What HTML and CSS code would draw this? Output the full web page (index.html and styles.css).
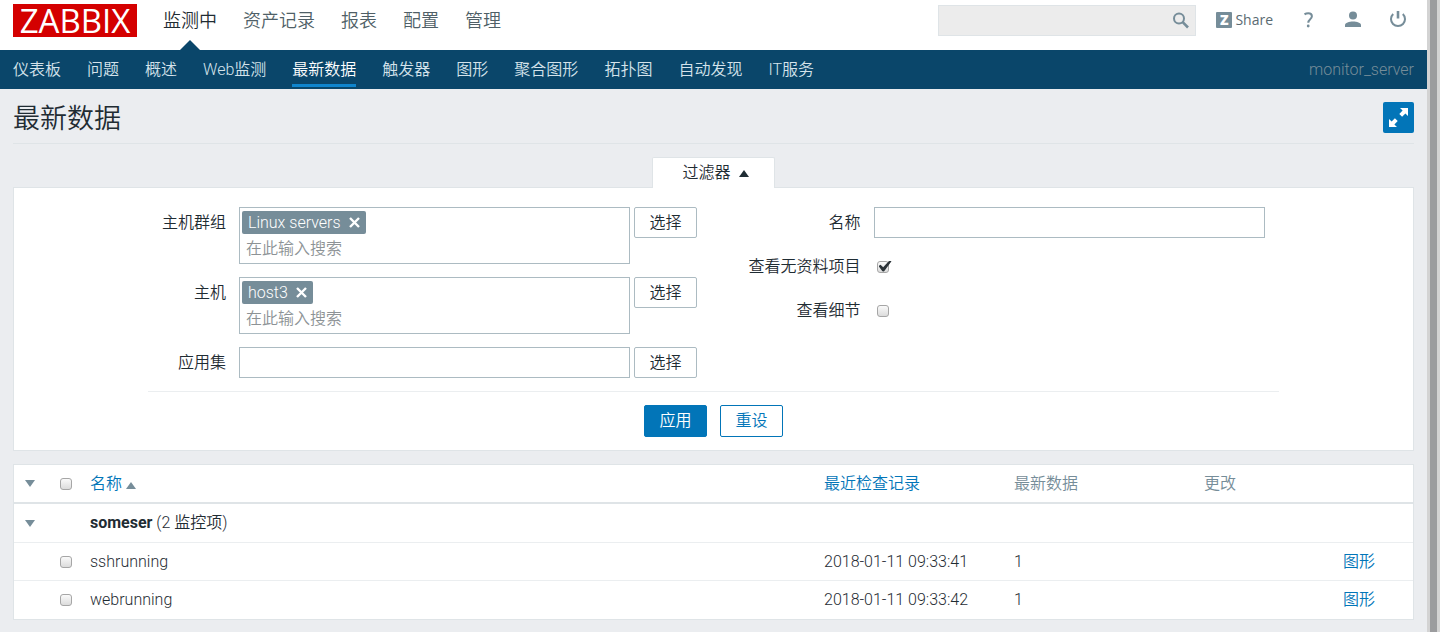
FILE: index.html
```
<!DOCTYPE html>
<html lang="zh-CN">
<head>
<meta charset="utf-8">
<title>最新数据</title>
<link rel="stylesheet" href="styles.css">
</head>
<body>
<div class="shell">
<div class="page">
  <header class="top">
    <a class="logo" href="#">ZABBIX</a>
    <nav class="menu">
      <a class="current" href="#">监测中</a>
      <a href="#">资产记录</a>
      <a href="#">报表</a>
      <a href="#">配置</a>
      <a href="#">管理</a>
    </nav>
    <form class="search">
      <input type="text" aria-label="搜索">
      <button type="button" aria-label="搜索">
        <svg width="18" height="18" viewBox="0 0 18 18"><circle cx="7" cy="6.500" r="5" fill="none" stroke="#768d99" stroke-width="2"/><path d="M10.700 10.200L16 15.500" stroke="#768d99" stroke-width="2.600"/></svg>
      </button>
    </form>
    <div class="tools">
      <a class="share" href="#"><span class="z">Z</span>Share</a>
      <a class="tool" href="#" aria-label="帮助"><svg width="16" height="18" viewBox="0 0 16 18"><path d="M4.500 3.400C5.600 2.600 6.800 2.200 8.300 2.200c2.200 0 3.600 1.100 3.600 3 0 3-3.600 3-3.600 6.500" fill="none" stroke="#768d99" stroke-width="2"/><circle cx="8.200" cy="15" r="1.400" fill="#768d99"/></svg></a>
      <a class="tool" href="#" aria-label="用户"><svg width="16" height="18" viewBox="0 0 16 18"><circle cx="8" cy="4.600" r="4" fill="#768d99"/><path d="M0 16v-2c0-2.200 4.200-3.500 8-3.500s8 1.300 8 3.500v2z" fill="#768d99"/></svg></a>
      <a class="tool" href="#" aria-label="退出"><svg width="16" height="18" viewBox="0 0 16 18"><path d="M3.200 3a7 7 0 1 0 9.600 0" fill="none" stroke="#768d99" stroke-width="2"/><path d="M8 0v7.500" stroke="#768d99" stroke-width="2.600"/></svg></a>
    </div>
  </header>
  <nav class="sub">
    <a href="#">仪表板</a>
    <a href="#">问题</a>
    <a href="#">概述</a>
    <a href="#">Web监测</a>
    <a class="current" href="#">最新数据</a>
    <a href="#">触发器</a>
    <a href="#">图形</a>
    <a href="#">聚合图形</a>
    <a href="#">拓扑图</a>
    <a href="#">自动发现</a>
    <a href="#">IT服务</a>
    <span class="server">monitor_server</span>
  </nav>
  <main>
    <div class="title">
      <h1>最新数据</h1>
      <button type="button" class="full" aria-label="全屏"><svg width="19" height="19" viewBox="0 0 19 19" fill="#fff"><path d="M11 0h8v8l-2.600-2.600-3.300 3.300-2.800-2.800 3.300-3.300z"/><path d="M0 19v-8l2.600 2.600 3.300-3.300 2.800 2.800-3.300 3.300L8 19z"/></svg></button>
    </div>
    <div class="tabs"><button type="button" class="tab">过滤器<svg width="10" height="7" viewBox="0 0 10 7"><path d="M5 0l5 7H0z" fill="#1f2c33"/></svg></button></div>
    <form class="filter">
      <div class="fields">
        <div class="side">
          <div class="row"><label for="groups">主机群组</label>
            <div class="multi"><span class="chip">Linux servers<button type="button" aria-label="移除"><svg width="11" height="11" viewBox="0 0 11 11"><path d="M1 1l9 9M10 1l-9 9" stroke="#fff" stroke-width="2.400"/></svg></button></span><input id="groups" type="text" placeholder="在此输入搜索"></div>
            <button type="button" class="btn">选择</button></div>
          <div class="row"><label for="hosts">主机</label>
            <div class="multi"><span class="chip">host3<button type="button" aria-label="移除"><svg width="11" height="11" viewBox="0 0 11 11"><path d="M1 1l9 9M10 1l-9 9" stroke="#fff" stroke-width="2.400"/></svg></button></span><input id="hosts" type="text" placeholder="在此输入搜索"></div>
            <button type="button" class="btn">选择</button></div>
          <div class="row"><label for="app">应用集</label><input id="app" class="text" type="text"><button type="button" class="btn">选择</button></div>
        </div>
        <div class="side right">
          <div class="row"><label for="name">名称</label><input id="name" class="text" type="text"></div>
          <div class="row"><label for="nodata">查看无资料项目</label><input id="nodata" class="check" type="checkbox" checked></div>
          <div class="row"><label for="details">查看细节</label><input id="details" class="check" type="checkbox"></div>
        </div>
      </div>
      <div class="actions"><button type="button" class="btn primary">应用</button><button type="button" class="btn outline">重设</button></div>
    </form>
    <table class="data">
      <colgroup><col class="c-arrow"><col class="c-check"><col><col class="c-wide"><col class="c-wide"><col class="c-change"><col class="c-link"></colgroup>
      <thead>
        <tr><th class="fold"><svg width="10" height="7" viewBox="0 0 10 7"><path d="M0 0h10L5 7z" fill="#768d99"/></svg></th><th><input class="check" type="checkbox" aria-label="全选"></th><th><a href="#">名称<svg class="sort" width="10" height="7" viewBox="0 0 10 7"><path d="M5 0l5 7H0z" fill="#768d99"/></svg></a></th><th><a href="#">最近检查记录</a></th><th>最新数据</th><th>更改</th><th></th></tr>
      </thead>
      <tbody>
        <tr><td class="fold"><svg width="10" height="7" viewBox="0 0 10 7"><path d="M0 0h10L5 7z" fill="#768d99"/></svg></td><td></td><td colspan="5"><strong>someser</strong> (2 监控项)</td></tr>
        <tr><td></td><td><input class="check" type="checkbox" aria-label="sshrunning"></td><td>sshrunning</td><td>2018-01-11 09:33:41</td><td>1</td><td></td><td><a href="#">图形</a></td></tr>
        <tr><td></td><td><input class="check" type="checkbox" aria-label="webrunning"></td><td>webrunning</td><td>2018-01-11 09:33:42</td><td>1</td><td></td><td><a href="#">图形</a></td></tr>
      </tbody>
    </table>
  </main>
</div>
<div class="scroll"></div>
</div>
</body>
</html>
```
FILE: styles.css
```
* { box-sizing: border-box; }
body {
  margin: 0;
  background: #ebedf0;
  color: #1f2c33;
  font: 350 16px/24px Roboto, "Noto Sans CJK SC", sans-serif;
}
a { color: #0275b8; text-decoration: none; }
button, input { font: inherit; color: inherit; margin: 0; }
button { padding: 0; border: 0; background: none; }
svg { display: block; }

.shell { display: flex; min-height: 100vh; }
.page { flex: 1; min-width: 0; }
.scroll { width: 13px; background: #9b9c9e; border: solid #d3d3d3; border-width: 0 3px; }

.top { display: flex; height: 50px; padding: 4px 21px 0 13px; background: #fff; }
.logo {
  width: 124px;
  height: 33px;
  background: #d40000;
  color: #fff;
  font: 500 33px/33px "Open Sans", sans-serif;
  text-align: center;
}
.menu { display: flex; gap: 26px; margin-left: 26px; font-size: 18px; line-height: 33px; }
.menu a { position: relative; height: 46px; color: #4f5f67; }
.menu .current { color: #1f2c33; }
.menu .current::after {
  content: "";
  position: absolute;
  bottom: 0;
  left: 50%;
  margin-left: -10px;
  border: 10px solid transparent;
  border-top-width: 0;
  border-bottom-color: #0a466a;
}
.search { display: flex; width: 258px; height: 31px; margin: 1px 20px 0 auto; border: 1px solid #dfe4e7; background: #ececec; }
.search input { flex: 1; min-width: 0; border: 0; background: none; }
.search button { width: 25px; padding: 5px 2px; }
.tools { display: flex; align-items: center; height: 31px; gap: 29px; }
.share { display: flex; align-items: center; gap: 3px; margin-right: -2px; color: #5a6a72; font: 400 14px/16px "Open Sans", sans-serif; }
.z { width: 16px; border-radius: 1px; background: #768d99; color: #fff; font-weight: 800; text-align: center; }

.sub { display: flex; gap: 26px; height: 39px; padding: 0 13px; background: #0a466a; line-height: 40px; }
.sub a { height: 37px; color: #d5e3eb; }
.sub .current { color: #fff; border-bottom: 3px solid #0f85cd; }
.server { margin-left: auto; color: #768d99; }

main { padding: 0 13px; }
.title { display: flex; justify-content: space-between; align-items: flex-start; height: 55px; padding-top: 13px; border-bottom: 1px solid #dfe4e7; white-space: nowrap; }
h1 { margin: 0; font-size: 27px; font-weight: 350; line-height: 35px; }
.full { width: 31px; height: 31px; padding: 6px; border-radius: 2px; background: #0275b8; }
.tabs { display: flex; justify-content: center; padding-top: 13px; }
.tab {
  position: relative;
  display: flex;
  align-items: center;
  gap: 8px;
  height: 31px;
  margin-bottom: -1px;
  padding: 0 25px 0 29px;
  border: 1px solid #dfe4e7;
  border-bottom: 0;
  border-radius: 2px 2px 0 0;
  background: #fff;
}
.filter { padding: 19px 13px 13px; border: 1px solid #dfe4e7; background: #fff; }
.fields { display: grid; grid-template-columns: 1fr 1fr; max-width: 1131px; margin: 0 auto; padding-bottom: 13px; border-bottom: 1px solid #ebeef0; }
.side { display: grid; align-content: start; gap: 13px; }
.row { display: flex; align-items: flex-start; gap: 4px; min-height: 31px; }
.row label { width: 78px; margin-right: 9px; line-height: 31px; text-align: right; }
.right .row { align-items: center; }
.right label { width: 147px; }
.multi, .text { width: 391px; min-width: 0; border: 1px solid #acbbc2; background: #fff; }
.text { height: 31px; padding: 0 6px; }
.multi { padding: 3px 2px 2px; }
.chip { display: flex; align-items: center; gap: 8px; width: max-content; height: 23px; padding: 0 6px; border-radius: 2px; background: #768d99; color: #fff; }
.multi input { display: block; width: 100%; height: 27px; padding: 1px 4px 0; border: 0; outline: 0; }
.multi input::placeholder { color: #8d9396; opacity: 1; }
.btn { width: 63px; height: 31px; border: 1px solid #acbbc2; border-radius: 2px; background: #fff; }
.actions { display: flex; justify-content: center; gap: 13px; padding-top: 13px; }
.actions .btn { height: 32px; border-color: #0275b8; }
.actions .outline { color: #0275b8; }
.actions .primary { background: #0275b8; color: #fff; }

.check {
  appearance: none;
  position: relative;
  display: block;
  width: 12px;
  height: 12px;
  border: 1px solid #a6a6a6;
  border-radius: 3px;
  background: linear-gradient(#fafafa, #dcdcdc);
}
.row .check { margin-left: 3px; }
.check:checked::after {
  content: "";
  position: absolute;
  top: -1px;
  left: 1px;
  width: 13px;
  height: 11px;
  background: #2b3338;
  clip-path: polygon(0 50%, 16% 38%, 36% 62%, 84% 0, 100% 6%, 42% 100%, 30% 98%);
}

.data { width: 100%; margin-top: 13px; border: 1px solid #dfe4e7; border-collapse: separate; border-spacing: 0; table-layout: fixed; background: #fff; }
.data th, .data td { height: 38px; padding: 0; border-bottom: 1px solid #ebeef0; font-weight: 350; text-align: left; white-space: nowrap; }
.data th { height: 39px; border-bottom: 2px solid #dfe4e7; color: #768d99; }
.data tbody tr:first-child td { height: 39px; }
.data tbody tr:last-child td { border-bottom: 0; }
.data .fold { padding-left: 11px; }
.data strong { font-weight: 700; }
.sort { display: inline-block; margin-left: 4px; }
.c-arrow { width: 46px; }
.c-check { width: 30px; }
.c-wide { width: 190px; }
.c-change { width: 139px; }
.c-link { width: 70px; }
```
